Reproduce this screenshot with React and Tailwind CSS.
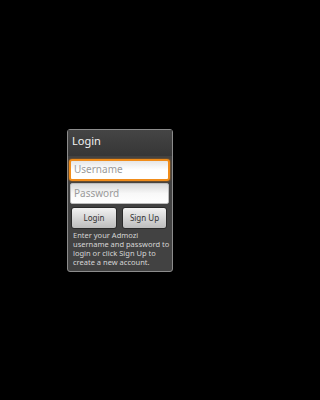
const helpLines = [
  'Enter your Admozi',
  'username and password to',
  'login or click Sign Up to',
  'create a new account.',
];

export default function App() {
  return (
    <div className="w-full min-h-screen bg-black" style={{ fontFamily: '"Noto Sans", "Open Sans", sans-serif' }}>
      <div className="w-[240px] h-[400px] flex items-center justify-center">
        <div className="w-[106px] h-[143px] border border-[#8c8c8c] rounded-[3px] bg-[#424242] flex flex-col">
          {/* title */}
          <div className="h-[26px] pl-[4px] pt-[4px] text-[11px] leading-[13px] text-[#f2f2f2] bg-gradient-to-b from-[#454545] to-[#363636]">
            Login
          </div>

          {/* fields */}
          <div className="mt-[3px] ml-[1px] w-[101px] h-[22px] rounded-[3px] border-2 border-[#f08c1a] bg-gradient-to-b from-[#e6e6e6] via-white to-white shadow-[0_0_2px_#c86a00] flex items-center pl-[3px] text-[10px] text-[#9a9a9a]">
            Username
          </div>
          <div className="mt-[2px] ml-[2px] w-[99px] h-[21px] rounded-[2px] border border-[#bdbdbd] bg-gradient-to-b from-[#d9d9d9] via-[#f8f8f8] to-white flex items-center pl-[3px] text-[10px] text-[#9a9a9a]">
            Password
          </div>

          {/* buttons */}
          <div className="mt-[3px] ml-[3px] flex gap-[5px]">
            <div className="w-[46px] h-[22px] rounded-[3px] border border-[#2a2a2a] bg-gradient-to-b from-[#f2f2f2] to-[#bdbdbd] flex items-center justify-center text-[8px] text-[#333]">
              Login
            </div>
            <div className="w-[45px] h-[22px] rounded-[3px] border border-[#2a2a2a] bg-gradient-to-b from-[#f2f2f2] to-[#bdbdbd] flex items-center justify-center text-[8px] text-[#333]">
              Sign Up
            </div>
          </div>

          {/* help text */}
          <div className="mt-[2px] pl-[5px] flex flex-col text-[7.5px] text-[#d6d6d6] whitespace-nowrap">
            {helpLines.map((line) => (
              <div key={line} className="h-[9px] leading-[9px]">
                {line}
              </div>
            ))}
          </div>
        </div>
      </div>
    </div>
  );
}
